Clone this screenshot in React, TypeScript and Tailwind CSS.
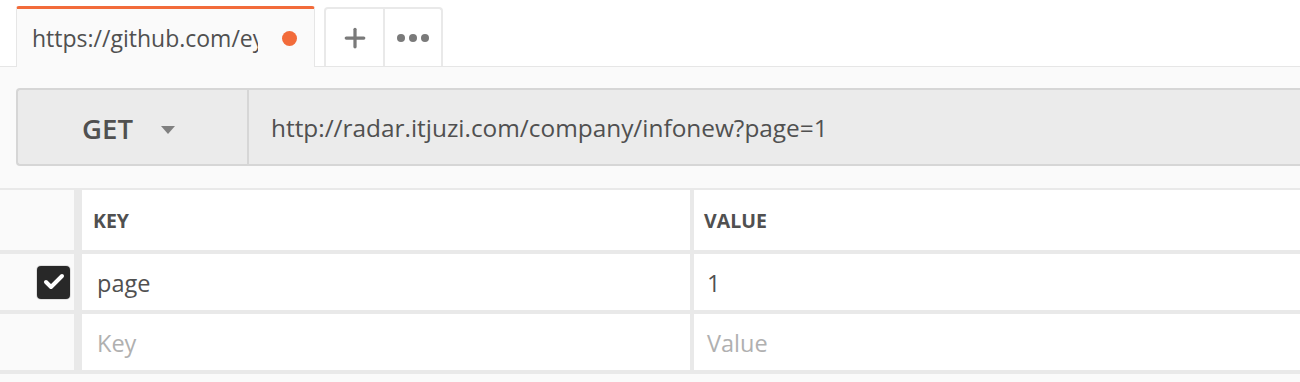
import { Check, Plus } from 'lucide-react';

const font = { fontFamily: '"Open Sans", "Liberation Sans", sans-serif' };

function TabStrip() {
  return (
    <div className="flex h-[67px] items-end border-b border-[#e6e6e6] bg-white pl-4">
      <div className="relative -mb-px flex h-[61px] w-[299px] items-center justify-between rounded-t-[3px] border-x border-[#e6e6e6] border-t-[3px] border-t-[#f26b3a] bg-[#fafafa] pl-[15px] pr-[17px]">
        <span className="w-[226px] overflow-hidden whitespace-nowrap text-[23px] text-[#505050]">
          https://github.com/eyqiu/itjuzi
        </span>
        <span className="h-[15px] w-[15px] shrink-0 rounded-full bg-[#f26b3a]" />
      </div>
      <div className="ml-[9px] flex h-[59px] rounded-t-[4px] border-x-2 border-t-2 border-[#e9e9e9] bg-white">
        <button className="flex w-[59px] items-center justify-center border-r-2 border-[#e9e9e9] text-[#7a7a7a]">
          <Plus size={30} strokeWidth={2.6} />
        </button>
        <button className="flex w-[56px] items-center justify-center text-[#7a7a7a]">
          <svg width="34" height="10" viewBox="0 0 34 10" fill="currentColor">
            <circle cx="5" cy="5" r="4" />
            <circle cx="17" cy="5" r="4" />
            <circle cx="29" cy="5" r="4" />
          </svg>
        </button>
      </div>
    </div>
  );
}

function UrlBar() {
  return (
    <div className="pl-4 pt-[21px] pb-[22px]">
      <div className="flex h-[78px] rounded-l-[4px] border-y-2 border-l-2 border-[#d6d6d6] bg-[#ebebeb] pt-[3px]">
        <div className="-mt-[3px] flex w-[231px] items-center justify-center gap-[28px] border-r-2 border-[#d6d6d6] pt-[3px] pr-[8px]">
          <span className="text-[27.5px] font-semibold text-[#505050]">GET</span>
          <span className="mt-[2px] h-0 w-0 border-x-[7px] border-t-[8px] border-x-transparent border-t-[#808080]" />
        </div>
        <div className="flex flex-1 items-center pl-[22px] text-[24.4px] text-[#505050]">
          http://radar.itjuzi.com/company/infonew?page=1
        </div>
      </div>
    </div>
  );
}

const rows = [
  { on: true, key: 'page', value: '1' },
  { on: false, key: '', value: '' },
];

function ParamsTable() {
  return (
    <div className="border-t-2 border-[#e9e9e9]">
      <div className="flex h-[64px] border-b-4 border-[#e9e9e9]">
        <div className="w-[74px] bg-[#fafafa]" />
        <div className="w-[8px] bg-[#e9e9e9]" />
        <div className="flex w-[608px] items-center bg-white pl-[11px] pt-[2px] text-[19.5px] font-bold text-[#505050]">KEY</div>
        <div className="w-[4px] bg-[#e9e9e9]" />
        <div className="flex flex-1 items-center bg-white pl-[10px] pt-[2px] text-[19.5px] font-bold text-[#505050]">VALUE</div>
      </div>
      {rows.map((r, i) => (
        <div key={i} className="flex h-[60px] border-b-4 border-[#e9e9e9]">
          <div className="flex w-[74px] items-center justify-end bg-[#fafafa] pr-[4px]">
            {r.on && (
              <span className="flex h-[33px] w-[33px] items-center justify-center rounded-[4px] bg-[#282828] text-white ring-1 ring-[#e0e0e0]">
                <Check size={24} strokeWidth={4} />
              </span>
            )}
          </div>
          <div className="w-[8px] bg-[#e9e9e9]" />
          <div className="flex w-[608px] items-center bg-white pl-[15px] pt-[3px] text-[23.5px]">
            {r.key ? <span className="text-[#505050]">{r.key}</span> : <span className="text-[#b0b0b0]">Key</span>}
          </div>
          <div className="w-[4px] bg-[#e9e9e9]" />
          <div className="flex flex-1 items-center bg-white pl-[13px] pt-[3px] text-[23.5px]">
            {r.value ? <span className="text-[#505050]">{r.value}</span> : <span className="text-[#b0b0b0]">Value</span>}
          </div>
        </div>
      ))}
    </div>
  );
}

export default function App() {
  return (
    <div className="h-[382px] w-[1300px] overflow-hidden bg-[#fafafa]" style={font}>
      <TabStrip />
      <UrlBar />
      <ParamsTable />
    </div>
  );
}
